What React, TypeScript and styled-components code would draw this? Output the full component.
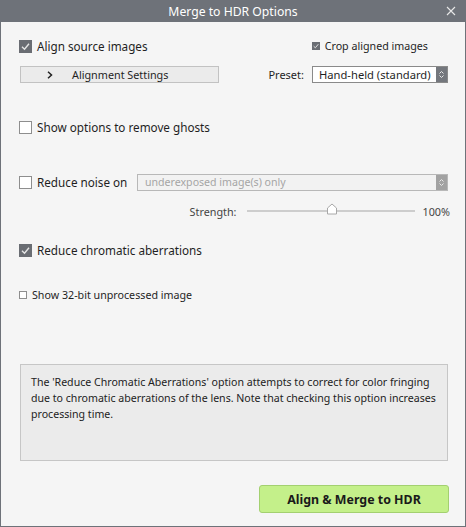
import styled, { createGlobalStyle } from "styled-components";

const GlobalStyle = createGlobalStyle`
  html, body {
    margin: 0;
    padding: 0;
    background: #f5f5f5;
  }
  * {
    box-sizing: border-box;
  }
`;

const Window = styled.div`
  width: 466px;
  height: 527px;
  background: #f5f5f5;
  border: 1px solid #6e7279;
  border-top: none;
  display: flex;
  flex-direction: column;
  font-family: "Noto Sans", "Open Sans", sans-serif;
  color: #1f1f1f;
`;

const TitleBar = styled.div`
  height: 22px;
  margin: 0 -1px;
  background: #6e7279;
  color: #ffffff;
  font-size: 12.2px;
  display: flex;
  align-items: center;
  justify-content: center;
  position: relative;
`;

const CloseBtn = styled.span`
  position: absolute;
  right: 8px;
  top: 4px;
  width: 14px;
  height: 14px;
  display: flex;
  align-items: center;
  justify-content: center;
`;

const Body = styled.div`
  flex: 1;
  padding: 0 17px 0 18px;
  display: flex;
  flex-direction: column;
`;

const Row = styled.div<{ $top: number; $h: number }>`
  margin-top: ${(p) => p.$top}px;
  height: ${(p) => p.$h}px;
  display: flex;
  align-items: center;
`;

const Label = styled.label<{ $small?: boolean }>`
  display: flex;
  align-items: center;
  gap: 5px;
  font-size: ${(p) => (p.$small ? 10.7 : 11.7)}px;
  white-space: nowrap;
`;

const Box = styled.span<{ $checked?: boolean; $small?: boolean }>`
  width: ${(p) => (p.$small ? 8 : 13)}px;
  height: ${(p) => (p.$small ? 8 : 13)}px;
  border: 1px solid ${(p) => (p.$checked ? "#6a6d73" : "#8e8e8e")};
  background: ${(p) => (p.$checked ? "#6a6d73" : "#ffffff")};
  display: flex;
  align-items: center;
  justify-content: center;
  flex-shrink: 0;
`;

const Spacer = styled.div`
  flex: 1;
`;

const ExpandButton = styled.div`
  width: 199px;
  height: 17px;
  margin-left: 1px;
  background: #ebebeb;
  border: 1px solid #c2c2c2;
  display: flex;
  align-items: center;
  font-size: 10.8px;
  padding-left: 26px;
  gap: 19px;
`;

const FieldLabel = styled.span`
  font-size: 11px;
  margin-right: 8px;
`;

const Select = styled.div<{ $disabled?: boolean; $w: number }>`
  width: ${(p) => p.$w}px;
  height: 17px;
  border: 1px solid ${(p) => (p.$disabled ? "#b8b8b8" : "#8a8a8a")};
  background: ${(p) => (p.$disabled ? "#f2f2f2" : "#ffffff")};
  color: ${(p) => (p.$disabled ? "#a5a5a5" : "#1f1f1f")};
  display: flex;
  align-items: center;
  font-size: ${(p) => (p.$disabled ? 10.6 : 11.2)}px;
  padding-left: ${(p) => (p.$disabled ? 7 : 6)}px;
`;

const SelectText = styled.span`
  flex: 1;
  white-space: nowrap;
  overflow: hidden;
`;

const SelectArrow = styled.span<{ $disabled?: boolean }>`
  width: 11px;
  height: 15px;
  background: ${(p) => (p.$disabled ? "#a2a2a2" : "#74777d")};
  display: flex;
  align-items: center;
  justify-content: center;
`;

const StrengthRow = styled(Row)`
  justify-content: flex-end;
  font-size: 10.8px;
  color: #444;
  margin-right: -2px;
`;

const Track = styled.div`
  position: relative;
  width: 168px;
  height: 2px;
  background: #cdcdcd;
  margin: 0 8px 0 10px;
`;

const Thumb = styled.span`
  position: absolute;
  left: 79px;
  top: -7px;
`;

const InfoBox = styled.div`
  margin-top: 62px;
  height: 97px;
  margin-left: 1px;
  background: #ebebeb;
  border: 1px solid #c6c6c6;
  padding: 9px 8px 9px 10px;
  font-size: 10.6px;
  line-height: 16px;
  color: #222;
`;

const Footer = styled.div`
  margin-top: 24px;
  display: flex;
  justify-content: flex-end;
`;

const PrimaryButton = styled.button`
  width: 190px;
  height: 28px;
  background: #c4f08a;
  border: 1px solid #a3d070;
  border-radius: 3px;
  font-family: "Noto Sans", "Open Sans", sans-serif;
  font-weight: 700;
  font-size: 12.4px;
  color: #1a1a1a;
  margin-right: -1px;
`;

function Check({ checked, small }: { checked?: boolean; small?: boolean }) {
  return (
    <Box $checked={checked} $small={small}>
      {checked && (
        <svg width={small ? 6 : 9} height={small ? 6 : 9} viewBox="0 0 9 9">
          <path d="M1 4.8 L3.5 7.2 L8 1.8" stroke="#e6e6e6" strokeWidth="1.4" fill="none" />
        </svg>
      )}
    </Box>
  );
}

function Arrows() {
  return (
    <svg width="7" height="9" viewBox="0 0 7 9">
      <path d="M1.5 3.5 L3.5 1.5 L5.5 3.5 M1.5 5.5 L3.5 7.5 L5.5 5.5" stroke="#e8e8e8" strokeWidth="1" fill="none" />
    </svg>
  );
}

export default function App() {
  return (
    <>
      <GlobalStyle />
      <Window>
        <TitleBar>
          Merge to HDR Options
          <CloseBtn>
            <svg width="10" height="10" viewBox="0 0 10 10">
              <path d="M1 1 L9 9 M9 1 L1 9" stroke="#e8e8e8" strokeWidth="1.1" />
            </svg>
          </CloseBtn>
        </TitleBar>
        <Body>
          <Row $top={16} $h={16}>
            <Label>
              <Check checked />
              Align source images
            </Label>
            <Spacer />
            <Label $small>
              <Check checked small />
              Crop aligned images
            </Label>
            <div style={{ width: 20 }} />
          </Row>
          <Row $top={12} $h={17}>
            <ExpandButton>
              <svg width="6" height="8" viewBox="0 0 6 8">
                <path d="M1 0.8 L4.5 4 L1 7.2" stroke="#222" strokeWidth="1.5" fill="none" />
              </svg>
              Alignment Settings
            </ExpandButton>
            <Spacer />
            <FieldLabel>Preset:</FieldLabel>
            <Select $w={136}>
              <SelectText>Hand-held (standard)</SelectText>
              <SelectArrow>
                <Arrows />
              </SelectArrow>
            </Select>
          </Row>
          <Row $top={36} $h={16}>
            <Label>
              <Check />
              Show options to remove ghosts
            </Label>
          </Row>
          <Row $top={39} $h={16}>
            <Label>
              <Check />
              Reduce noise on
            </Label>
            <Spacer />
            <Select $w={311} $disabled>
              <SelectText>underexposed image(s) only</SelectText>
              <SelectArrow $disabled>
                <Arrows />
              </SelectArrow>
            </Select>
          </Row>
          <StrengthRow $top={14} $h={14}>
            <span>Strength:</span>
            <Track>
              <Thumb>
                <svg width="12" height="12" viewBox="0 0 12 12">
                  <path d="M1.5 11 L1.5 5 L6 1 L10.5 5 L10.5 11 Z" fill="#ffffff" stroke="#a8a8a8" strokeWidth="1" />
                </svg>
              </Thumb>
            </Track>
            <span>100%</span>
          </StrengthRow>
          <Row $top={24} $h={16}>
            <Label>
              <Check checked />
              Reduce chromatic aberrations
            </Label>
          </Row>
          <Row $top={30} $h={14}>
            <Label $small>
              <Check small />
              Show 32-bit unprocessed image
            </Label>
          </Row>
          <InfoBox>
            The 'Reduce Chromatic Aberrations' option attempts to correct for color fringing
            due to chromatic aberrations of the lens. Note that checking this option increases
            processing time.
          </InfoBox>
          <Footer>
            <PrimaryButton>Align &amp; Merge to HDR</PrimaryButton>
          </Footer>
        </Body>
      </Window>
    </>
  );
}
